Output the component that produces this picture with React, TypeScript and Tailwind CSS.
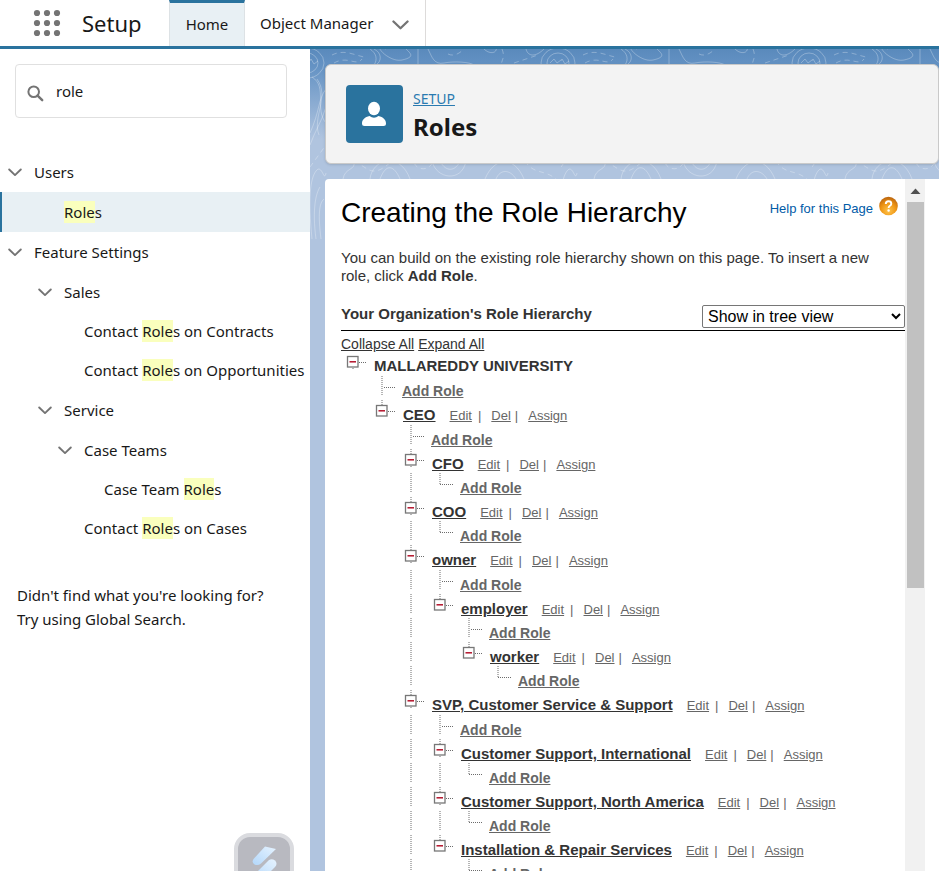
import { ReactNode } from "react";

type Role = { name: string; children?: Role[]; continues?: boolean };

const roles: Role = {
  name: "CEO",
  children: [
    { name: "CFO" },
    { name: "COO" },
    { name: "owner", children: [{ name: "employer", children: [{ name: "worker" }] }] },
    {
      name: "SVP, Customer Service & Support",
      continues: true,
      children: [
        { name: "Customer Support, International" },
        { name: "Customer Support, North America" },
        { name: "Installation & Repair Services" },
      ],
    },
  ],
};

const DOTS = { stroke: "#6c6c6c", strokeWidth: 1, strokeDasharray: "1 1" };

function Guide({ on }: { on: boolean }) {
  return (
    <svg className="shrink-0 self-start" width="29" height="19" aria-hidden="true">
      {on && <path d="M12 0V19" fill="none" {...DOTS} />}
    </svg>
  );
}

function Elbow({ last }: { last: boolean }) {
  return (
    <svg className="shrink-0 self-start" width="29" height="19" aria-hidden="true">
      <path d={last ? "M12 0V11.5M12 11.5H25" : "M12 0V19M14 11.5H25"} fill="none" {...DOTS} />
    </svg>
  );
}

function Toggle({ root, last }: { root?: boolean; last: boolean }) {
  return (
    <button type="button" aria-label="Collapse" className="shrink-0 self-start">
      <svg width="29" height="19" className="block" aria-hidden="true">
        {!root && <path d="M12 0V5" {...DOTS} />}
        {(root || !last) && <path d="M12 17V19" {...DOTS} />}
        <path d="M18 11.5H25" {...DOTS} />
        <rect x="6.500" y="5.500" width="10.500" height="10.500" fill="#fff" stroke="#777" strokeWidth="1.300" />
        <path d="M8.500 10.800H15" stroke="#b3122a" strokeWidth="1.500" />
      </svg>
    </button>
  );
}

function TreeRow({ guides, children }: { guides: boolean[]; children: ReactNode }) {
  return (
    <div className="flex h-6 items-end whitespace-nowrap">
      {guides.map((on, i) => (
        <Guide key={i} on={on} />
      ))}
      {children}
    </div>
  );
}

function AddRole({ guides, last }: { guides: boolean[]; last: boolean }) {
  return (
    <li>
      <TreeRow guides={guides}>
        <Elbow last={last} />
        <a href="#add" className="ml-[3px] text-sm leading-[18px] font-bold text-[#666] underline">
          Add Role
        </a>
      </TreeRow>
    </li>
  );
}

function RoleNode({ role, guides, last }: { role: Role; guides: boolean[]; last: boolean }) {
  const children = role.children ?? [];
  const isLast = last && !role.continues;
  const inner = [...guides, !isLast];
  return (
    <li>
      <TreeRow guides={guides}>
        <Toggle last={isLast} />
        <a href="#role" className="mr-3.5 ml-1 text-[15px] leading-[18px] font-bold text-[#333] underline">
          {role.name}
        </a>
        <span className="flex text-[13px] leading-[17px] text-[#666]">
          <a href="#edit" className="mr-1.5 underline">Edit</a>|
          <a href="#del" className="mr-1 ml-2.5 underline">Del</a>|
          <a href="#assign" className="ml-2.5 underline">Assign</a>
        </span>
      </TreeRow>
      <ul className={children.length > 0 && guides.length < 3 ? "pt-px" : ""}>
        <AddRole guides={inner} last={children.length === 0} />
        {children.map((child, i) => (
          <RoleNode key={child.name} role={child} guides={inner} last={i === children.length - 1} />
        ))}
      </ul>
    </li>
  );
}

function Chevron({ size }: { size: number }) {
  return (
    <svg width={size} height={size} viewBox="0 0 14 14" className="shrink-0" aria-hidden="true">
      <path d="M1.200 4.500L7 10.100L12.800 4.500" fill="none" stroke="#747474" strokeWidth="1.900" strokeLinecap="round" strokeLinejoin="round" />
    </svg>
  );
}

type NavItem = { label: string; indent: string; group?: boolean; active?: boolean };

const nav: NavItem[] = [
  { label: "Users", indent: "pl-2", group: true },
  { label: "Roles", indent: "pl-[62px]", active: true },
  { label: "Feature Settings", indent: "pl-2", group: true },
  { label: "Sales", indent: "pl-[38px]", group: true },
  { label: "Contact Roles on Contracts", indent: "pl-21" },
  { label: "Contact Roles on Opportunities", indent: "pl-21" },
  { label: "Service", indent: "pl-[38px]", group: true },
  { label: "Case Teams", indent: "pl-[58px]", group: true },
  { label: "Case Team Roles", indent: "pl-26" },
  { label: "Contact Roles on Cases", indent: "pl-21" },
];

function rowClass(item: NavItem) {
  if (item.active) return "flex h-10 items-center border-l-2 border-[#2a739e] bg-[#e8f0f4]";
  return item.group ? "flex h-10 items-center" : "flex h-[39px] items-center";
}

function Highlighted({ text }: { text: string }) {
  const at = text.indexOf("Role");
  if (at < 0) return <>{text}</>;
  return (
    <>
      {text.slice(0, at)}
      <mark className="bg-[#faffbd] py-px text-inherit">Role</mark>
      {text.slice(at + 4)}
    </>
  );
}

function Contours() {
  return (
    <svg className="absolute inset-0 h-full w-full" aria-hidden="true">
      <defs>
        <linearGradient id="sky" x1="0" x2="0" y1="0" y2="1">
          <stop offset="0" stopColor="#5a8abc" />
          <stop offset="0.2" stopColor="#6593c4" />
          <stop offset="1" stopColor="#b0c4df" />
        </linearGradient>
        <pattern id="topo" width="251" height="200" patternUnits="userSpaceOnUse">
          <g fill="none" stroke="#fff" strokeOpacity="0.28">
            <path d="M-20 14a17 15 0 0 1 34 0a17 15 0 0 1-34 0M231 14a17 15 0 0 1 34 0a17 15 0 0 1-34 0" />
            <path d="M-14 14a11 10 0 0 1 22 0a11 10 0 0 1-22 0M237 14a11 10 0 0 1 22 0a11 10 0 0 1-22 0" />
            <path d="M-5 12l3 3 3-5 3 5 4-3M240 14l4-4 3 4 4-3" />
            <path d="M64 0C72 4 72 12 66 16M76 0C60 -8 78 14 92 11S100 4 96 0M108 0V16M60 0C66 4 68 10 64 16" />
            <path d="M118 0C122 8 124 16 134 14S160 13 164 16M174 0C180 6 188 4 186 -2M216 0C218 8 226 8 234 0" />
            <path strokeDasharray="5 4" d="M22 6C34 0 44 6 54 8M24 14C38 6 46 18 52 10M138 5C144 8 150 4 154 0M192 0C196 10 190 12 192 16M204 14L228 6" />
            <path d="M2 28C18 38 4 60 16 74M7 30C20 48 2 68 9 86M0 84C10 62 8 50 16 40M0 96C4 84 12 72 16 58" />
            <path d="M2 190C-2 150 0 130 6 122S14 134 16 124M6 190C2 160 6 144 10 138M11 190C8 166 9 154 14 150" />
            <path d="M33 130C35 118 46 122 44 112M122 112C126 130 152 134 156 112M130 112C136 124 146 122 150 112M175 130C184 108 204 106 214 130M186 130C190 120 200 120 206 130" />
            <path d="M60 130C62 110 90 102 100 130M70 130C76 114 84 116 90 130" />
            <path strokeDasharray="5 4" d="M0 118L16 96M44 112C60 120 62 130 82 112M104 114C108 122 120 122 123 112M215 112C224 126 234 120 246 130" />
          </g>
        </pattern>
      </defs>
      <rect width="100%" height="90" fill="url(#sky)" />
      <rect y="90" width="100%" height="100%" fill="#b0c4df" />
      <rect width="100%" height="190" fill="url(#topo)" />
    </svg>
  );
}

export default function App() {
  return (
    <div className="flex h-screen flex-col overflow-hidden bg-white font-['Noto_Sans','Open_Sans',sans-serif] text-[15px] text-[#181818]">
      <header className="flex h-[49px] shrink-0 border-b-[3px] border-[#2a739e]">
        <div className="flex w-[169px] items-center gap-[21px] pl-[33px]">
          <button type="button" aria-label="App Launcher">
            <svg width="28" height="28" fill="#747474" className="block" aria-hidden="true">
              {[4, 14, 24].map((y) => [4, 14, 24].map((x) => <circle key={`${x}-${y}`} cx={x} cy={y} r="3.1" />))}
            </svg>
          </button>
          <span className="text-[22px]">Setup</span>
        </div>
        <nav className="flex">
          <a href="#home" className="flex w-[76px] items-center justify-center border-x border-t-[3px] border-x-[#dde2e5] border-t-[#2a739e] bg-[#e8f0f4]">
            Home
          </a>
          <div className="flex items-center gap-[19px] border-r border-[#dddbda] pr-4 pl-[15px]">
            <a href="#objects">Object Manager</a>
            <button type="button" aria-label="Object Manager list" className="pt-0.5">
              <Chevron size={17} />
            </button>
          </div>
        </nav>
      </header>

      <div className="flex min-h-0 flex-1">
        <aside className="relative w-[310px] shrink-0 overflow-hidden">
          <label className="mt-[15px] mr-[23px] ml-[15px] flex h-[54px] items-center gap-3 rounded border border-[#e0e0e0] pl-[11px]">
            <svg width="17" height="17" fill="none" stroke="#747474" className="mt-1 shrink-0" aria-hidden="true">
              <circle cx="6.7" cy="6.7" r="5.3" strokeWidth="2" />
              <path d="M10.6 10.6L15.2 15.2" strokeWidth="2.4" strokeLinecap="round" />
            </svg>
            <input aria-label="Quick Find" defaultValue="role" className="w-full outline-none" />
          </label>
          <ul className="mt-[34px]">
            {nav.map((item) => (
              <li key={item.label} className={rowClass(item)}>
                <a href="#nav" className={`flex items-center gap-3 whitespace-nowrap ${item.indent}`}>
                  {item.group && <Chevron size={14} />}
                  <span>
                    <Highlighted text={item.label} />
                  </span>
                </a>
              </li>
            ))}
          </ul>
          <p className="mt-[35px] pl-[17px] leading-6">
            Didn't find what you're looking for?
            <br />
            Try using Global Search.
          </p>
          <button
            type="button"
            aria-label="Assistant"
            className="absolute -bottom-[22px] left-[234px] size-[60px] rounded-2xl border-4 border-[#dadbdf] bg-[#b8b9c0]"
          >
            <svg width="52" height="52" viewBox="0 0 52 52" className="block" aria-hidden="true">
              <defs>
                <linearGradient id="bolt" x1="1" x2="0" y1="0" y2="1">
                  <stop offset="0" stopColor="#e6f3ff" />
                  <stop offset="1" stopColor="#b3d7fa" />
                </linearGradient>
              </defs>
              <path fill="url(#bolt)" d="M27 9.500L38 12L23 26.500Q20 29 16.500 27.500Q13 25 16 21.500Z" />
              <path fill="url(#bolt)" d="M31 23Q34 21.500 37 23.500Q40 26.500 37 30L24 43L14 40Z" />
            </svg>
          </button>
        </aside>

        <main className="relative min-w-0 flex-1 overflow-hidden">
          <Contours />
          <div className="relative flex h-full flex-col gap-[15px] pt-[15px] pl-[15px]">
            <div className="flex h-[100px] shrink-0 items-start gap-2.5 rounded-md border border-[#c9c9c9] bg-[#f3f3f3] pt-5 pl-5 shadow-sm">
              <div className="flex h-[58px] w-[57px] items-center justify-center rounded bg-[#2a739e]">
                <svg width="26" height="26" fill="#fff" aria-hidden="true">
                  <ellipse cx="12" cy="7.500" rx="6" ry="6.800" />
                  <path d="M0 22.500C0 18.500 3 16 7.500 15Q12 18.500 16.500 15C21 16 24 18.500 24 22.500Q24 25 21.500 25H2.500Q0 25 0 22.500Z" />
                </svg>
              </div>
              <div className="pt-1">
                <a href="#setup" className="block text-sm leading-5 text-[#2a7ab0] underline">SETUP</a>
                <h1 className="text-2xl leading-9 font-bold">Roles</h1>
              </div>
            </div>

            <div className="flex min-h-0 flex-1 rounded-tl bg-white pr-3.5 font-['Liberation_Sans',Arial,sans-serif] text-[#333]">
              <div className="min-w-0 flex-1 overflow-hidden pl-4">
                <div className="flex items-start justify-between pt-4 pr-[7px]">
                  <h2 className="text-[28px] leading-9 text-black">Creating the Role Hierarchy</h2>
                  <a href="#help" className="flex items-start gap-1.5 text-[13px] text-[#015ba7]">
                    <span className="pt-1">Help for this Page</span>
                    <svg width="19" height="21" viewBox="0 -1 19 20" aria-hidden="true">
                      <defs>
                        <radialGradient id="orb" cx="0.5" cy="0.75" r="0.7">
                          <stop offset="0" stopColor="#ffc44d" />
                          <stop offset="0.6" stopColor="#ee9412" />
                          <stop offset="1" stopColor="#c06a10" />
                        </radialGradient>
                      </defs>
                      <circle cx="9.500" cy="9.500" r="9.300" fill="url(#orb)" />
                      <path d="M6.800 7.500Q6.800 4.800 9.500 4.800Q12.300 4.800 12.300 7.200Q12.300 8.600 10.700 9.500Q9.600 10.200 9.600 11.400" fill="none" stroke="#fff" strokeWidth="1.900" />
                      <circle cx="9.600" cy="14" r="1.200" fill="#fff" />
                    </svg>
                  </a>
                </div>
                <p className="mt-[18px] text-[15px] leading-[18px]">
                  You can build on the existing role hierarchy shown on this page. To insert a new
                  <br />
                  role, click <b>Add Role</b>.
                </p>
                <div className="mt-5 flex items-start justify-between border-b border-black pb-0.5">
                  <h3 className="text-[15px] leading-[18px] font-bold">Your Organization's Role Hierarchy</h3>
                  <select aria-label="View" className="h-[23px] w-[203px] rounded-xs border border-[#767676] bg-white pl-px text-base leading-5 text-black">
                    <option>Show in tree view</option>
                  </select>
                </div>
                <div className="mt-[3px] flex gap-1 text-sm leading-5">
                  <a href="#collapse" className="underline">Collapse All</a>
                  <a href="#expand" className="underline">Expand All</a>
                </div>
                <div className="-mt-[3px] flex h-6 items-end">
                  <Toggle root last />
                  <span className="ml-1 text-[15px] leading-[18px] font-bold">MALLAREDDY UNIVERSITY</span>
                </div>
                <ul className="pt-px">
                  <AddRole guides={[false]} last={false} />
                  <RoleNode role={roles} guides={[false]} last />
                </ul>
              </div>
              <div className="flex w-5 shrink-0 flex-col items-center bg-[#f1f1f1]" aria-hidden="true">
                <svg width="20" height="23" className="shrink-0">
                  <path d="M5.500 15L10.500 9.500L15.500 15Z" fill="#505050" />
                </svg>
                <div className="h-[386px] w-[17px] bg-[#c1c1c1]" />
              </div>
            </div>
          </div>
        </main>
      </div>
    </div>
  );
}
